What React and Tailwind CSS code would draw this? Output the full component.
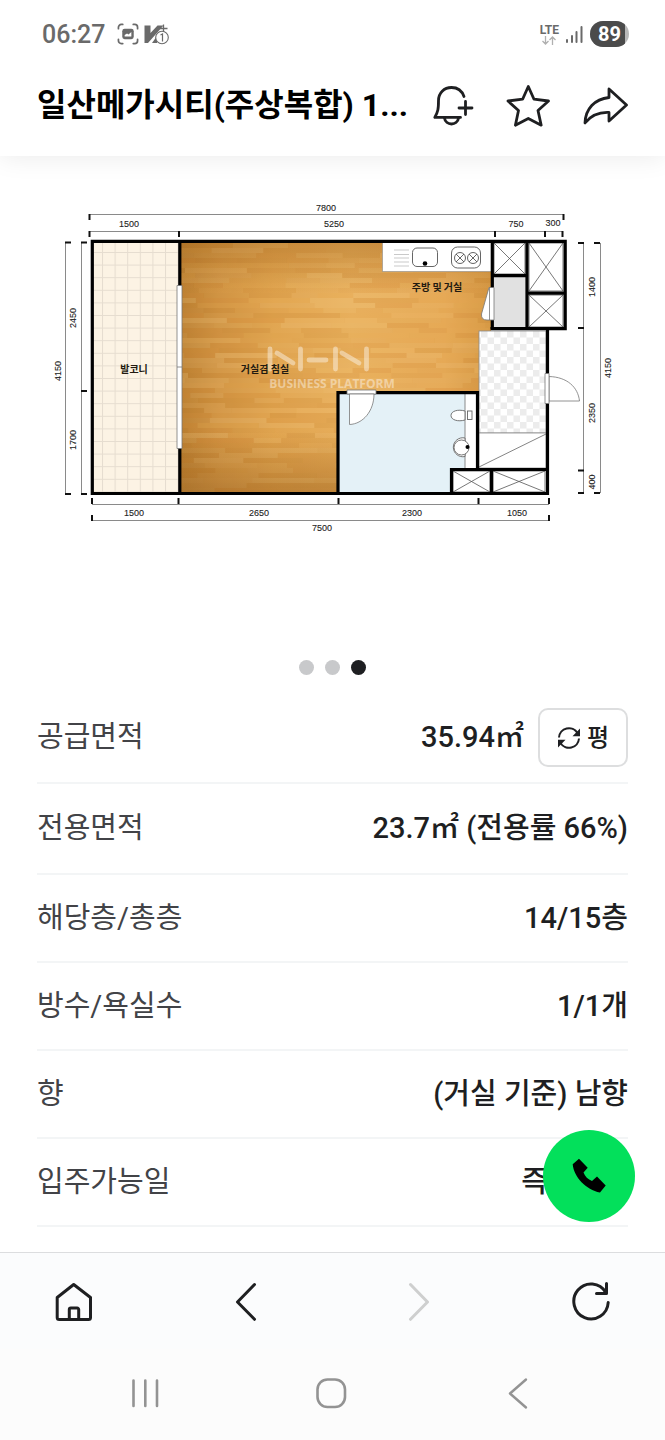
import { useState } from 'react'

const line = '#8a8a8a'

// small seeded generator so the planks stay the same on every render
const makePlanks = () => {
  const planks = []
  let seed = 7
  const rand = () => {
    seed = (seed * 16807) % 2147483647
    return seed / 2147483647
  }
  const tones = ['#ffd083', '#d08a35', '#ffd994', '#df9540', '#f3b860']
  for (let y = 243; y < 492; y += 5) {
    let x = 170 - rand() * 40
    while (x < 491) {
      const w = 26 + rand() * 40
      planks.push({ x, y, w, fill: tones[Math.floor(rand() * tones.length)], o: 0.08 + rand() * 0.16 })
      x += w
    }
  }
  return planks
}
const planks = makePlanks()

const dims = [
  { t: '7800', x: 326, y: 211 },
  { t: '1500', x: 129, y: 227 },
  { t: '5250', x: 334, y: 227 },
  { t: '750', x: 516, y: 227 },
  { t: '300', x: 553, y: 226 },
  { t: '1500', x: 134, y: 516 },
  { t: '2650', x: 259, y: 516 },
  { t: '2300', x: 412, y: 516 },
  { t: '1050', x: 517, y: 516 },
  { t: '7500', x: 322, y: 531 },
]

const sideDims = [
  { t: '2450', x: 76, y: 318 },
  { t: '1700', x: 76, y: 440 },
  { t: '4150', x: 61, y: 371 },
  { t: '1400', x: 595, y: 287 },
  { t: '2350', x: 595, y: 413 },
  { t: '400', x: 595, y: 482 },
  { t: '4150', x: 611, y: 368 },
]

function CrossBox({ x, y, w, h }) {
  return (
    <g stroke="#555" strokeWidth="0.8" fill="#fff">
      <rect x={x} y={y} width={w} height={h} />
      <path d={`M${x} ${y}l${w} ${h}M${x + w} ${y}l${-w} ${h}`} />
    </g>
  )
}

function FloorPlan() {
  return (
    <svg viewBox="0 156 665 480" className="block w-full" role="img" aria-label="평면도">
      <defs>
        <linearGradient id="wood" x1="0" x2="1" y1="0" y2="0">
          <stop offset="0" stopColor="#b87d30" />
          <stop offset="0.12" stopColor="#cd9040" />
          <stop offset="0.3" stopColor="#dea24e" />
          <stop offset="0.55" stopColor="#e6ae5c" />
          <stop offset="0.85" stopColor="#e3a654" />
          <stop offset="1" stopColor="#d39642" />
        </linearGradient>
        <linearGradient id="shade" x1="0" x2="0" y1="0" y2="1">
          <stop offset="0" stopColor="#9a5f18" stopOpacity="0.35" />
          <stop offset="0.2" stopColor="#9a5f18" stopOpacity="0" />
          <stop offset="0.75" stopColor="#9a5f18" stopOpacity="0" />
          <stop offset="1" stopColor="#8a5212" stopOpacity="0.4" />
        </linearGradient>
        <pattern id="tiles" x="102" y="252" width="12.6" height="12.6" patternUnits="userSpaceOnUse">
          <rect width="12.6" height="12.6" fill="#fcf3e4" />
          <path d="M0.5 0V12.6M0 0.5H12.6" stroke="#e6ddd0" strokeWidth="1" />
        </pattern>
        <pattern id="checker" x="481" y="331" width="13" height="13" patternUnits="userSpaceOnUse">
          <rect width="13" height="13" fill="#fff" />
          <path d="M0 0h6.500v6.500H0zM6.500 6.500h6.500v6.500H6.500z" fill="#ececec" />
        </pattern>
        <clipPath id="room">
          <path d="M181 243H491V331H479V392H337V492H181Z" />
        </clipPath>
      </defs>

      {/* dimension lines */}
      <path
        d="M89 214.5H564M89 231.5H563M92 504.5H549M92 520.5H549M65.5 242V494M81.5 242V494M583.5 243V493M600.5 243V493"
        stroke={line} strokeWidth="1" fill="none"
      />
      <path
        d="M89.500 214v6M563.500 214v6M89.500 231v6M179 231v6M495 231v6M545 231v6M562.500 231v6
          M92 498v6M178.500 498v6M338.500 498v6M478.500 498v6M549 498v6M92 515v6M549 515v6
          M65 242.500h6M65 494h6M81 242.500h6M81 391h6M81 494h6
          M584 243h-6M584 328h-6M584 470.500h-6M584 493h-6M600 243h-6M600 493h-6"
        stroke="#111" strokeWidth="2" fill="none"
      />
      <g className="font-['Liberation_Sans',sans-serif] text-[9px]" fill="#222" stroke="#222" strokeWidth="0.1" textAnchor="middle">
        {dims.map((d, i) => <text key={i} x={d.x} y={d.y}>{d.t}</text>)}
        {sideDims.map((d, i) => (
          <text key={i} x={d.x} y={d.y} transform={`rotate(-90 ${d.x} ${d.y})`}>{d.t}</text>
        ))}
      </g>

      {/* floors */}
      <rect x="93" y="242" width="87" height="251" fill="url(#tiles)" />
      <g clipPath="url(#room)">
        <rect x="181" y="243" width="310" height="250" fill="url(#wood)" />
        {planks.map((p, i) => (
          <rect key={i} x={p.x} y={p.y} width={p.w} height="5" fill={p.fill} opacity={p.o} />
        ))}
        <rect x="181" y="243" width="310" height="250" fill="url(#shade)" />
      </g>
      <rect x="339" y="394" width="126" height="98" fill="#e4f1f7" />
      <path d="M465 394h12v76h-12z" fill="#fff" />
      <path d="M465 394v76" stroke={line} />
      <rect x="479" y="331" width="67" height="102" fill="url(#checker)" stroke={line} strokeWidth="0.8" />
      <path d="M479 433h67v35h-67z" fill="#fff" stroke={line} strokeWidth="0.8" />
      <path d="M479 467L546 434" stroke="#666" strokeWidth="0.8" />
      <rect x="493" y="277" width="33" height="51" fill="#e1e1e1" />

      {/* kitchen counter */}
      <rect x="382.500" y="242" width="109" height="29.500" fill="#fff" stroke={line} strokeWidth="0.6" />
      <path d="M394 250h15M394 254.500h15M394 258h15M394 262h15M394 266h15" stroke="#bbb" strokeWidth="0.8" />
      <g fill="none" stroke="#555" strokeWidth="0.9">
        <rect x="412.500" y="248" width="25" height="18.500" rx="4.500" />
        <rect x="451.500" y="247" width="29" height="21" rx="6" />
        <circle cx="460" cy="258" r="5.500" />
        <circle cx="473" cy="258" r="5.500" />
        <path d="M456 254l8 8M464 254l-8 8M469 254l8 8M477 254l-8 8" />
      </g>
      <circle cx="425" cy="263.500" r="2.300" fill="#000" />

      {/* closets */}
      <CrossBox x={494} y={243} w={31} h={31} />
      <CrossBox x={529} y={243} w={34} h={48} />
      <CrossBox x={529} y={295} w={34} h={32} />
      <CrossBox x={453} y={471} w={37} h={21} />
      <CrossBox x={493} y={471} w={52} h={21} />

      {/* walls */}
      <g fill="none" stroke="#000" strokeWidth="3.200">
        <path d="M547.500 330V493.500H92.300V241.300H565.200V328.700H490.500" />
        <path d="M179.800 242V286M179.800 448V493M492.300 242V288M492.300 319V329M492 275.700H527M527 242V329M527 293.200H565" />
        <path d="M338 493V392.700H477.500V469.500M547 469.500H451.500V493M491.500 470V493" />
      </g>

      {/* windows and doors */}
      <g fill="#fff" stroke="#777" strokeWidth="0.800">
        <path d="M177 285.500h5v163h-5zM177 367h5" />
        <path d="M489 287.500L481.500 314Q481 320 487 320H494V287.500Z" />
        <path d="M489.500 287.500V320" />
        <path d="M347 390h29v4h-29z" />
        <path d="M349.500 394V424.500C363 424 374 411 374 394Z" />
        <path d="M549 376.500C567 377 578 387 579.500 401H549Z" />
        <path d="M545 373.500h4v30h-4z" />
      </g>

      {/* bathroom fixtures */}
      <g fill="#fff" stroke="#666" strokeWidth="0.900">
        <path d="M465 411C458 409 451 411 451 415.500S458 422 465 420Z" />
        <rect x="467.500" y="411" width="4.500" height="8.500" />
        <path d="M465 438A9.500 9.500 0 1 0 465 456.500Z" />
        <circle cx="461.500" cy="447.500" r="7.500" />
      </g>
      <circle cx="467.500" cy="447" r="2" fill="#000" />

      {/* watermark */}
      <g opacity="0.42">
        <path
          d="M270 349v20M277 353L293 363M300.500 349v20M309 360h17M335.500 349v20M342 353L359 363M366.500 349v20"
          stroke="#fff" strokeWidth="4.800" strokeLinecap="round"
        />
        <text x="332" y="388" textAnchor="middle" fill="#fff" className="font-['Open_Sans',sans-serif] text-[12px] font-bold">
          BUSINESS PLATFORM
        </text>
      </g>

      <g className="font-['Noto_Sans_CJK_KR',sans-serif] text-[10px] font-bold" fill="#221a10" textAnchor="middle">
        <text x="134" y="373">발코니</text>
        <text x="265" y="373">거실겸 침실</text>
        <text x="437" y="291">주방 및 거실</text>
      </g>
    </svg>
  )
}

function StatusBar() {
  return (
    <div className="flex h-[68px] items-center justify-between pl-[42px] pr-9 text-[#6a6a6a]">
      <div className="flex items-center">
        <span className="text-[25px] font-medium leading-none">06:27</span>
        <svg className="ml-3 size-[22px]" viewBox="0 0 23 23" fill="none" stroke="currentColor" strokeWidth="1.800" strokeLinecap="round">
          <path d="M1.500 6V4.500a3 3 0 0 1 3-3H6M17 1.500h1.500a3 3 0 0 1 3 3V6M21.500 17v1.500a3 3 0 0 1-3 3H17M6 21.500H4.500a3 3 0 0 1-3-3V17" />
          <rect x="5.500" y="6" width="12" height="11" rx="2.500" fill="currentColor" stroke="none" />
          <path d="M8 14v-1.500l2.500-1.500 1.500 1 3-2.500v4.500z" fill="#fff" stroke="none" />
        </svg>
        <svg className="ml-1 h-[23px] w-[27px]" viewBox="0 0 27 23" fill="currentColor">
          <path d="M1.500 2.500H7.500V10L14.500 2.500H20.500L5 20H1.500Z" />
          <path d="M9 20l5-7v7z" />
          <path d="M20.500 1.500v8M16.500 5.500H24.500" stroke="currentColor" strokeWidth="1.300" />
          <circle cx="19" cy="14.500" r="6.300" fill="#fff" stroke="currentColor" strokeWidth="1.100" />
          <path d="M17.500 12l2-1v7.500" fill="none" stroke="currentColor" strokeWidth="1.200" />
        </svg>
      </div>
      <div className="flex items-center">
        <div className="flex flex-col items-center">
          <span className="text-[12px] font-bold leading-[12px]">LTE</span>
          <svg className="h-[9px] w-4 text-[#b0b0b0]" viewBox="0 0 16 9" fill="none" stroke="currentColor" strokeWidth="1.300">
            <path d="M4.500 0v8M1.500 5l3 3 3-3M11.500 9V1M8.500 4l3-3 3 3" />
          </svg>
        </div>
        <svg className="ml-1.5 h-[19px] w-[18px]" viewBox="0 0 18 19" stroke="currentColor" strokeWidth="2" strokeLinecap="round">
          <path d="M2 15v2M7 11v6M11.500 7v10" />
          <path d="M16.500 2v15" />
        </svg>
        <div className="ml-[7px] flex h-[26px] w-[39px] overflow-hidden rounded-full bg-[#b8b8b8]">
          <span className="flex w-[35px] items-center justify-center bg-[#4b4b4b] pl-1 text-[20px] font-bold leading-none text-white">89</span>
        </div>
      </div>
    </div>
  )
}

function Header() {
  return (
    <header className="relative z-10 bg-white pb-3.5 shadow-[0_2px_24px_rgba(0,0,0,0.08)]">
      <StatusBar />
      <div className="flex h-[74px] items-center gap-[30px] px-[37px]">
        <h1 className="min-w-0 flex-1 whitespace-nowrap text-[32px] font-bold leading-none text-black">일산메가시티(주상복합) 1...</h1>
        <button aria-label="알림 추가" className="shrink-0">
          <svg className="block size-[46px]" viewBox="0 0 46 46" fill="none" stroke="#1e1f21" strokeWidth="2.800" strokeLinecap="round" strokeLinejoin="round">
            <path d="M34 14.500C32 9 27.500 5.500 21.500 5.500C14 5.500 8.500 11 8.500 18.500C8.500 27 8 29.500 4.800 35.400H30.500" />
            <path d="M14.500 36C15.500 44 27.500 44 28.500 36M35.500 19.500v13M29 26h13" />
          </svg>
        </button>
        <button aria-label="관심 매물" className="shrink-0">
          <svg className="block size-[46px]" viewBox="0 0 46 46" fill="none" stroke="#1e1f21" strokeWidth="2.800" strokeLinejoin="round">
            <path d="M22.300 4.500L28 17.200L42.500 19L32 28.500L35.200 43.200L22.300 36.500L9.400 43.200L12.500 28.500L2 19L16.600 17.200Z" />
          </svg>
        </button>
        <button aria-label="공유" className="shrink-0">
          <svg className="block size-[46px]" viewBox="0 0 46 46" fill="none" stroke="#1e1f21" strokeWidth="2.800" strokeLinejoin="round">
            <path d="M27 7L44.500 23L27 39V30.500C17 30 9 33.500 3 41C3.500 27 12.500 17 27 15.500Z" />
          </svg>
        </button>
      </div>
    </header>
  )
}

export default function App() {
  const [slide, setSlide] = useState(2)
  const [pyeong, setPyeong] = useState(false)

  const rows = [
    { label: '공급면적', value: pyeong ? '10.87평' : '35.94㎡', unit: true, height: 'h-[91px]' },
    { label: '전용면적', value: pyeong ? '7.17평 (전용률 66%)' : '23.7㎡ (전용률 66%)', height: 'h-[91px]' },
    { label: '해당층/총층', value: '14/15층', height: 'h-[88px]' },
    { label: '방수/욕실수', value: '1/1개', height: 'h-[88px]' },
    { label: '향', value: '(거실 기준) 남향', height: 'h-[88px]' },
    { label: '입주가능일', value: '즉시입주', height: 'h-[88px]' },
  ]

  return (
    <div className="flex h-screen flex-col bg-white font-['Roboto','Noto_Sans_CJK_KR',sans-serif]">
      <Header />

      <main className="relative flex-1 overflow-hidden">
        <FloorPlan />
        <div className="flex justify-center gap-[11px] pb-[18px] pt-6">
          {[0, 1, 2].map(i => (
            <button key={i} aria-label={`사진 ${i + 1}`} onClick={() => setSlide(i)}
              className={`size-[15px] rounded-full ${slide === i ? 'bg-[#1e1f22]' : 'bg-[#c8c9cb]'}`} />
          ))}
        </div>

        <dl className="px-[37px] text-[29px] leading-none">
          {rows.map(r => (
            <div key={r.label} className={`flex items-center justify-between border-b-2 border-[#f3f5f6] ${r.height}`}>
              <dt className="text-[#424347]">{r.label}</dt>
              <dd className="flex items-center gap-3.5 font-medium text-[#1e1f22]">
                {r.value}
                {r.unit && (
                  <button onClick={() => setPyeong(!pyeong)}
                    className="flex h-[59px] w-[90px] items-center justify-center gap-1.5 rounded-[10px] border-2 border-[#dddedf] text-[24px]">
                    <svg className="size-6" viewBox="0 0 24 24" fill="none" stroke="currentColor" strokeWidth="2">
                      <path d="M2 11.500A10 10 0 0 1 20.500 7M22 12.500A10 10 0 0 1 3.500 17" />
                      <path d="M23 2.500V10.200H15.500ZM1 21.500V13.800H8.500Z" fill="currentColor" stroke="none" />
                    </svg>
                    {pyeong ? '㎡' : '평'}
                  </button>
                )}
              </dd>
            </div>
          ))}
        </dl>

        <button aria-label="전화하기"
          className="absolute bottom-[30px] right-[30px] flex size-[92px] items-center justify-center rounded-full bg-[#03e05b]">
          <svg className="size-9" viewBox="0 0 36 36" fill="#000">
            <path d="M1.700 6.200L8 0.800L16.700 9.800L12.500 14.500C14 18.500 17 21.500 21 23L26 18.500L34.700 27.500L29 34.500C15 31.500 3 19.500 1.700 6.200Z" />
          </svg>
        </button>
      </main>

      <footer className="border-t border-[#dcdddf] bg-[#fbfcfd]">
        <nav className="flex h-24 items-center justify-between px-[54px] text-[#1e1f21]">
          <button aria-label="홈">
            <svg className="block size-10" viewBox="0 0 40 40" fill="none" stroke="currentColor" strokeWidth="3" strokeLinejoin="round">
              <path d="M3.200 16.500L19.700 3.500L36.500 16.500V36.500a2 2 0 0 1-2 2H5.200a2 2 0 0 1-2-2Z" />
              <path d="M15.300 38V28.500a1.500 1.500 0 0 1 1.500-1.500h6.400a1.500 1.500 0 0 1 1.500 1.500V38" />
            </svg>
          </button>
          <button aria-label="뒤로">
            <svg className="block size-10" viewBox="0 0 40 40" fill="none" stroke="currentColor" strokeWidth="3" strokeLinecap="round" strokeLinejoin="round">
              <path d="M28.500 3.500L11.500 21L28.500 38.300" />
            </svg>
          </button>
          <button aria-label="앞으로" disabled className="text-[#cecfcf]">
            <svg className="block size-10" viewBox="0 0 40 40" fill="none" stroke="currentColor" strokeWidth="3" strokeLinecap="round" strokeLinejoin="round">
              <path d="M11.500 3.500L28.500 21L11.500 38.300" />
            </svg>
          </button>
          <button aria-label="새로고침">
            <svg className="block size-10" viewBox="0 0 40 40" fill="none" stroke="currentColor" strokeWidth="3" strokeLinecap="round" strokeLinejoin="round">
              <path d="M37.200 21.500A17.200 17.500 0 1 1 34.800 11.500" />
              <path d="M35.500 2.500V12.500H25.500" />
            </svg>
          </button>
        </nav>
        <div className="flex h-[91px] items-center justify-between bg-[#fcfcfc] pb-1 pl-[125px] pr-[127px] text-[#939393]">
          <button aria-label="최근 앱">
            <svg className="block size-10" viewBox="0 0 40 40" stroke="currentColor" strokeWidth="2.600" strokeLinecap="round">
              <path d="M8.500 7.500V33M20.300 7.500V33M32 7.500V33" />
            </svg>
          </button>
          <button aria-label="홈 화면">
            <svg className="block size-10" viewBox="0 0 40 40" fill="none" stroke="currentColor" strokeWidth="2.600">
              <rect x="5.500" y="6.500" width="27.500" height="27.500" rx="10" />
            </svg>
          </button>
          <button aria-label="이전">
            <svg className="block size-10" viewBox="0 0 40 40" fill="none" stroke="currentColor" strokeWidth="2.400" strokeLinecap="round" strokeLinejoin="round">
              <path d="M28 6.500L12 20.500L28 34.500" />
            </svg>
          </button>
        </div>
      </footer>
    </div>
  )
}
